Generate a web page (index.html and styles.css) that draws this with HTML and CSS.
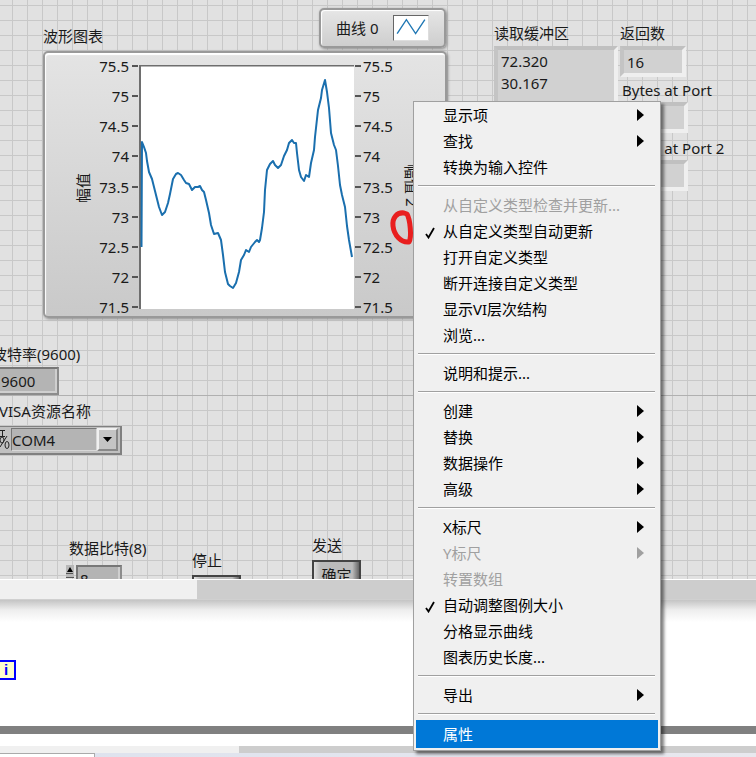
FILE: index.html
```
<!DOCTYPE html>
<html lang="zh-CN">
<head>
  <meta charset="UTF-8" />
  <meta name="viewport" content="width=device-width, initial-scale=1.0" />
  <title>波形图表</title>
  <link rel="stylesheet" href="styles.css">
</head>
<body>
  <!-- front panel -->
  <main class="panel">
    <div class="origin-line"></div>

    <div class="item legend">
      <span>曲线 0</span>
      <svg class="legend-plot" width="36" height="26" viewBox="0 0 36 26">
        <path d="M3 19 L13 4 L23 19 L33 4" fill="none" stroke="#1f77b4" stroke-width="1.5"/>
      </svg>
    </div>

    <h1 class="item chart-title">波形图表</h1>
    <section class="item chart">
      <div class="axis-name">幅值</div>
      <ul class="scale">
        <li>75.5</li><li>75</li><li>74.5</li><li>74</li><li>73.5</li><li>73</li><li>72.5</li><li>72</li><li>71.5</li>
      </ul>
      <svg class="plot" width="215" height="244" viewBox="139 65 215 244">
        <rect x="139" y="65" width="215" height="244" fill="#fff"/>
        <path d="M140 309 V65.5 H354" fill="none" stroke="#6e6e6e" stroke-width="2"/>
        <path d="M141.500 247 L142 142 L144 147 L146 153 L147 161 L149 172 L152 179 L155 191 L157 199 L159 207 L162 215 L165 212 L167 206 L168 203 L170 194 L173 179 L176 174 L178 173 L181 175 L184 180 L186 183 L189 184 L192 190 L195 187 L198 187 L200 186 L202 190 L204 192 L206 200 L209 213 L211 225 L214 234 L218 233 L221 240 L223 255 L225 272 L228 284 L230 286 L233 288 L236 283 L239 272 L241 260 L244 255 L246 250 L249 252 L251 247 L255 242 L257 240 L259 242 L260 240 L262 228 L264 212 L265 190 L267 170 L270 164 L273 161 L275 165 L278 168 L281 165 L284 156 L287 150 L289 143 L292 140 L294 143 L296 143 L297 153 L299 170 L301 177 L304 181 L306 175 L309 177 L311 163 L314 150 L315 137 L318 110 L321 98 L322 90 L325 80 L327 92 L329 108 L331 133 L334 145 L336 150 L338 166 L340 185 L342 195 L345 207 L347 226 L349 240 L352 257" fill="none" stroke="#1a6fae" stroke-width="2" stroke-linejoin="round"/>
      </svg>
      <ul class="scale scale-right">
        <li>75.5</li><li>75</li><li>74.5</li><li>74</li><li>73.5</li><li>73</li><li>72.5</li><li>72</li><li>71.5</li>
      </ul>
      <div class="axis-name axis-name-right">幅值 2</div>
    </section>
    <svg class="item mark" width="26" height="38" viewBox="0 0 26 38">
      <path d="M15 4 C8 3 3 9 4 17 C5 26 12 34 20 33 C23 28 21 10 18 5 Z" fill="none" stroke="#e81e1e" stroke-width="5" stroke-linejoin="round"/>
    </svg>

    <div class="item read-buffer">
      <label for="buffer">读取缓冲区</label>
      <textarea id="buffer" class="sunken" readonly>72.320
30.167</textarea>
    </div>
    <div class="item returned">
      <label for="count">返回数</label>
      <input id="count" class="sunken" value="16" readonly>
    </div>
    <div class="item bytes">
      <label for="bytes1">Bytes at Port</label>
      <input id="bytes1" class="sunken" readonly>
    </div>
    <div class="item bytes bytes-2">
      <label for="bytes2">Bytes at Port 2</label>
      <input id="bytes2" class="sunken" readonly>
    </div>

    <div class="item baud">
      <label for="baud">波特率(9600)</label>
      <input id="baud" class="classic" value="9600">
    </div>
    <div class="item visa">
      <label for="visa">VISA资源名称</label>
      <div class="visa-box">
        <svg width="12" height="22" viewBox="0 0 12 22" fill="none" stroke="#222">
          <path d="M1 1.500 H6 M3.500 1 V7 M1 7.500 H6 M1 18 L8 7"/>
          <ellipse cx="3" cy="11" rx="2" ry="3"/>
          <ellipse cx="8" cy="16" rx="2" ry="3.500"/>
        </svg>
        <select id="visa"><option>COM4</option></select>
        <svg class="drop" width="21" height="23" viewBox="0 0 17 19">
          <path d="M4 7 H13 L8.500 12 Z" fill="#000"/>
        </svg>
      </div>
    </div>
    <div class="item data-bits">
      <label for="bits">数据比特(8)</label>
      <div class="bits-row">
        <svg width="8" height="13" viewBox="0 0 8 13">
          <rect width="8" height="13" fill="#b8b8b8"/>
          <path d="M4 2 L7 7 H1 Z" fill="#000"/>
          <path d="M0 8.500 H7 M0 12.500 H8" stroke="#555"/>
        </svg>
        <input id="bits" class="classic" value="8">
      </div>
    </div>
    <div class="item stop">
      <label for="stop">停止</label>
      <button id="stop" class="push"></button>
    </div>
    <div class="item send">
      <label for="send">发送</label>
      <button id="send" class="push">确定</button>
    </div>
  </main>
  <div class="scrollbar"><div class="thumb"></div></div>

  <!-- block diagram -->
  <section class="diagram">
    <div class="iteration">i</div>
    <div class="loop-edge"></div>
  </section>
  <div class="scrollbar scrollbar-thin"><div class="thumb"></div></div>
  <footer class="tabs"><div class="tab"></div></footer>

  <!-- context menu -->
  <nav class="menu">
    <button class="sub">显示项</button>
    <button class="sub">查找</button>
    <button>转换为输入控件</button>
    <hr>
    <button disabled>从自定义类型检查并更新...</button>
    <button class="checked">从自定义类型自动更新</button>
    <button>打开自定义类型</button>
    <button>断开连接自定义类型</button>
    <button>显示VI层次结构</button>
    <button>浏览...</button>
    <hr>
    <button>说明和提示...</button>
    <hr>
    <button class="sub">创建</button>
    <button class="sub">替换</button>
    <button class="sub">数据操作</button>
    <button class="sub">高级</button>
    <hr>
    <button class="sub">X标尺</button>
    <button class="sub" disabled>Y标尺</button>
    <button disabled>转置数组</button>
    <button class="checked">自动调整图例大小</button>
    <button>分格显示曲线</button>
    <button>图表历史长度...</button>
    <hr>
    <button class="sub">导出</button>
    <hr>
    <button class="active">属性</button>
  </nav>

  <script>
    const arrow = '<svg class="arrow" width="7" height="12" viewBox="0 0 7 12"><path d="M0 0 L7 6 L0 12 Z" fill="currentColor"/></svg>';
    const tick = '<svg class="tick" width="10" height="12" viewBox="0 0 10 12"><path d="M1 7 L3.500 10.500 L9 1" fill="none" stroke="currentColor" stroke-width="1.800"/></svg>';
    document.querySelectorAll(".menu .sub").forEach(b => b.insertAdjacentHTML("beforeend", arrow));
    document.querySelectorAll(".menu .checked").forEach(b => b.insertAdjacentHTML("afterbegin", tick));
  </script>
</body>
</html>
```
FILE: styles.css
```
* {
  box-sizing: border-box;
}
body {
  margin: 0;
  min-height: 100vh;
  display: flex;
  flex-direction: column;
  position: relative;
  overflow: hidden;
  font-family: "Noto Sans", "Noto Sans CJK SC", sans-serif;
  font-size: 15px;
  line-height: 20px;
  color: #1a1a1a;
  background: #fff;
}
button, input, select, textarea {
  font: inherit;
  color: inherit;
  margin: 0;
  border-radius: 0;
}
label {
  display: block;
  white-space: nowrap;
}

/* front panel */
.panel {
  flex: 1;
  position: relative;
  overflow: hidden;
  background-color: #e1e1e1;
  background-image:
    linear-gradient(90deg, #c8c8c8 1px, transparent 1px),
    linear-gradient(#c8c8c8 1px, transparent 1px);
  background-size: 15px 15px;
  background-position: 12px 5px;
}
.item {
  position: absolute;
}
.origin-line {
  position: absolute;
  top: 395px;
  width: 100%;
  height: 1px;
  background: #b0b0b0;
}
.legend {
  left: 319px;
  top: 8px;
  display: flex;
  align-items: center;
  gap: 15px;
  padding: 5px 15px;
  border: 2px solid #999;
  border-radius: 5px;
  background: linear-gradient(#e6e6e6, #cecece);
  box-shadow: inset 1px 1px 1px #fff, 1px 1px 3px #888;
}
.legend-plot {
  background: #fff;
  border: 1px solid #ddd;
  border-top-color: #666;
  border-left-color: #666;
}
.chart-title {
  left: 43px;
  top: 26px;
  margin: 0;
  font-size: 15px;
  font-weight: normal;
}
.chart {
  left: 43px;
  top: 51px;
  width: 404px;
  height: 267px;
  display: flex;
  padding: 12px 2px 0 28px;
  border: 2px solid #999;
  border-radius: 5px;
  background: linear-gradient(#e4e4e4, #c9c9c9);
  box-shadow: inset 1px 2px 1px #fff, 1px 1px 3px #888;
}
.axis-name {
  writing-mode: vertical-rl;
  text-orientation: sideways;
  transform: rotate(180deg);
  height: 245px;
  text-align: center;
}
.axis-name-right {
  transform: none;
  margin-left: 4px;
  padding-bottom: 4px;
}
.scale {
  display: flex;
  flex-direction: column;
  justify-content: space-between;
  list-style: none;
  margin: -9px 0 0;
  padding: 0;
  width: 45px;
  height: 261px;
}
.scale li {
  display: flex;
  align-items: center;
  justify-content: flex-end;
  gap: 3px;
}
.scale li::after {
  content: "";
  width: 6px;
  height: 2px;
  background: #555;
}
.plot {
  flex: none;
  margin-left: 1px;
}
.scale-right {
  margin-left: 1px;
  width: 43px;
}
.scale-right li {
  flex-direction: row-reverse;
  gap: 2px;
}
.mark {
  left: 389px;
  top: 209px;
}

/* indicators and controls */
.sunken {
  display: block;
  width: 66px;
  height: 31px;
  padding: 0 3px;
  border: 4px solid #efefef;
  border-top-color: #c0c0c0;
  border-left-color: #c4c4c4;
  background: #d1d1d1;
  outline: none;
}
.read-buffer {
  left: 494px;
  top: 23px;
}
.read-buffer .sunken {
  width: 124px;
  height: 106px;
  margin-top: 3px;
  line-height: 22px;
  resize: none;
  overflow: hidden;
}
.returned {
  left: 620px;
  top: 23px;
}
.returned .sunken {
  margin-top: 3px;
}
.bytes {
  left: 622px;
  top: 80px;
}
.bytes .sunken {
  margin-top: 2px;
}
.bytes-2 {
  top: 138px;
}
.classic {
  display: block;
  padding: 0 2px;
  border: 2px solid #777;
  border-right-color: #8c8c8c;
  border-bottom-color: #8c8c8c;
  background: #b4b4b4;
  box-shadow: inset -2px -2px 0 #cfcfcf;
  outline: none;
}
.baud {
  left: -8px;
  top: 344px;
}
.baud .classic {
  width: 67px;
  height: 28px;
  margin-top: 3px;
  padding-left: 7px;
}
.visa {
  left: -1px;
  top: 401px;
}
.visa-box {
  display: flex;
  align-items: center;
  margin-top: 5px;
  padding: 1px 2px 2px 0;
  border: 1px solid #808080;
  border-width: 1px 2px 2px 0;
  background: #c0c0c0;
}
.visa-box select {
  appearance: none;
  width: 86px;
  height: 23px;
  padding: 0;
  border: 1px solid #d8d8d8;
  border-top-color: #777;
  border-left-color: #777;
  background: #b4b4b4;
}
.drop {
  background: #c4c4c4;
  border: 2px solid #f0f0f0;
  border-right-color: #888;
  border-bottom-color: #888;
  pointer-events: none;
}
.data-bits {
  left: 69px;
  top: 538px;
}
.bits-row {
  display: flex;
  gap: 2px;
  margin-top: 7px;
  margin-left: -3px;
}
.bits-row .classic {
  width: 46px;
  height: 27px;
}
.stop {
  left: 192px;
  top: 550px;
}
.send {
  left: 312px;
  top: 535px;
}
.push {
  display: block;
  width: 49px;
  height: 29px;
  margin-top: 5px;
  padding: 0;
  border: 2px solid #444;
  background: linear-gradient(90deg, #e0e0e0, #bbb 15%, #bbb 85%, #666);
}

/* window scrollbars */
.scrollbar {
  display: flex;
  height: 21px;
  padding-left: 197px;
  border-top: 1px solid #fff;
  border-bottom: 1px solid #d0d0d0;
  background: #f0f0f0;
}
.thumb {
  flex: 1;
  background: #cdcdcd;
}
.scrollbar-thin {
  height: 7px;
  padding-left: 239px;
  border: none;
}

/* block diagram */
.diagram {
  position: relative;
  height: 146px;
  display: flex;
  flex-direction: column;
  justify-content: flex-end;
  padding-bottom: 12px;
  background: linear-gradient(#c4c4c4, #eee 10px, #fff 22px);
}
.iteration {
  position: absolute;
  left: -4px;
  top: 60px;
  width: 20px;
  height: 20px;
  border: 2px solid #00f;
  background: #ffffcc;
  color: #00f;
  font: bold 15px/16px "Liberation Sans", sans-serif;
  text-align: center;
}
.loop-edge {
  height: 8px;
  background: #808080;
}
.tabs {
  height: 4px;
  background: linear-gradient(90deg, #dde2ee, #e8e8ee);
}
.tab {
  width: 95px;
  height: 4px;
  border: 1px solid #aaa;
  border-width: 1px 1px 0 0;
  background: #fff;
}

/* context menu */
.menu {
  position: absolute;
  left: 413px;
  top: 101px;
  width: 248px;
  display: flex;
  flex-direction: column;
  padding: 0 2px 2px;
  border: 1px solid #a0a0a0;
  background: #f0f0f0;
  box-shadow: 3px 3px 3px rgba(0, 0, 0, 0.5);
}
.menu button {
  display: flex;
  align-items: center;
  position: relative;
  height: 26px;
  padding: 0 14px 0 27px;
  border: none;
  background: none;
  color: #000;
  text-align: left;
}
.menu button:disabled {
  color: #a0a0a0;
}
.menu .active {
  height: 28px;
  background: #0078d7;
  color: #fff;
}
.menu hr {
  width: 237px;
  height: 2px;
  margin: 5px 2px;
  border: none;
  border-top: 1px solid #a0a0a0;
  background: #fff;
}
.arrow {
  margin-left: auto;
}
.tick {
  position: absolute;
  left: 9px;
  top: 9px;
}
```
